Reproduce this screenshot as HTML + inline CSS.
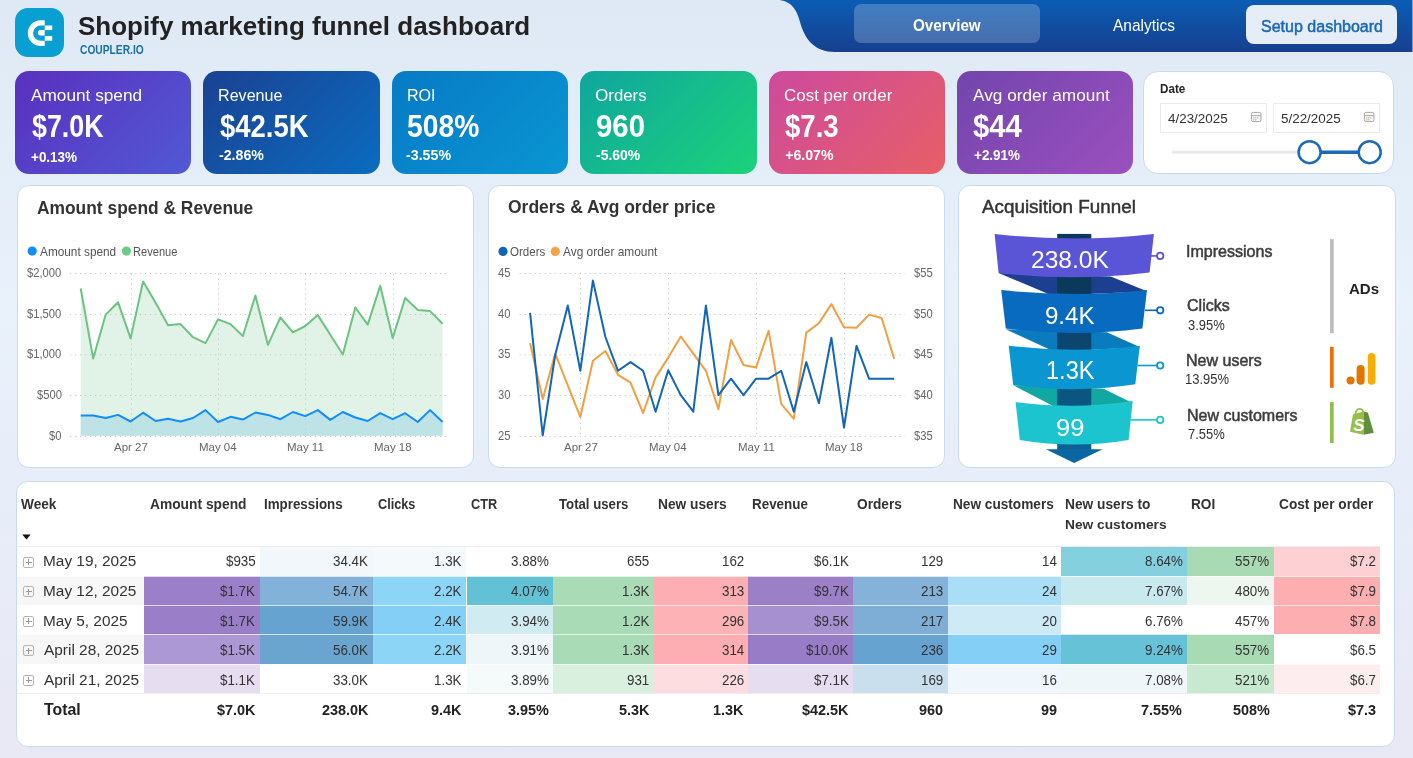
<!DOCTYPE html>
<html><head><meta charset="utf-8"><style>
html,body{margin:0;padding:0;width:1413px;height:758px;overflow:hidden;}
body{position:relative;font-family:"Liberation Sans", sans-serif;}
.t{position:absolute;line-height:1;white-space:nowrap;font-family:"Liberation Sans", sans-serif;}
.tl{position:absolute;left:0;top:0;width:1413px;height:758px;will-change:transform;-webkit-font-smoothing:antialiased;}
svg.ov{position:absolute;left:0;top:0;}
</style></head><body>
<div style="position:absolute;left:0.00px;top:0.00px;width:1413.00px;height:758.00px;background:linear-gradient(180deg,#dee9f5 0%,#e0ebf6 8%,#e9f1fb 40%,#e7eef9 62%,#e9e8f5 100%);"></div>
<svg class="ov" width="1413" height="758" viewBox="0 0 1413 758"><defs>
<linearGradient id="nav" x1="0" y1="0" x2="0" y2="1">
<stop offset="0" stop-color="#0a5db4"/><stop offset="1" stop-color="#17408f"/></linearGradient>
</defs>
<path d="M777,0 C791,0 797,10 800,22 C805,40 815,52 835,52 L1413,52 L1413,0 Z" fill="url(#nav)"/></svg>
<div style="position:absolute;left:1412.00px;top:0.00px;width:1.00px;height:52.00px;background:rgba(200,215,235,0.6);"></div>
<div style="position:absolute;left:854.00px;top:4.00px;width:186.00px;height:39.20px;background:rgba(255,255,255,0.22);border-radius:7px;"></div>
<div style="position:absolute;left:1246.20px;top:5.20px;width:150.80px;height:38.60px;background:#e6edf7;border-radius:8px;"></div>
<div style="position:absolute;left:15.00px;top:8.00px;width:49.00px;height:49.00px;background:#089fd3;border-radius:13px;"></div>
<svg class="ov" width="1413" height="758" viewBox="0 0 1413 758"><g fill="#fff">
<path d="M44.7,20.2 L40.7,20.2 A12.9,12.9 0 0 0 40.7,46 L44.7,46 L44.7,40.7 L40.7,40.7 A7.6,7.6 0 0 1 40.7,25.5 L44.7,25.5 Z"/>
<path d="M44.7,30.1 L40.5,30.1 A2.65,2.65 0 0 0 40.5,35.4 L44.7,35.4 Z"/>
<rect x="44.7" y="25.5" width="7.5" height="4.6"/>
<rect x="44.7" y="36.1" width="7.5" height="4.6"/>
</g></svg>
<div style="position:absolute;left:15.00px;top:71.00px;width:176.40px;height:103.00px;background:linear-gradient(135deg,#5a30bf,#5159d4);border-radius:14px;"></div>
<div style="position:absolute;left:203.40px;top:71.00px;width:176.40px;height:103.00px;background:linear-gradient(135deg,#1b4192,#0a6cc0);border-radius:14px;"></div>
<div style="position:absolute;left:391.80px;top:71.00px;width:176.40px;height:103.00px;background:linear-gradient(135deg,#077ac6,#0a96d2);border-radius:14px;"></div>
<div style="position:absolute;left:580.20px;top:71.00px;width:176.40px;height:103.00px;background:linear-gradient(135deg,#0fa69e,#1cd27a);border-radius:14px;"></div>
<div style="position:absolute;left:768.60px;top:71.00px;width:176.40px;height:103.00px;background:linear-gradient(135deg,#cd4a9d,#e75f66);border-radius:14px;"></div>
<div style="position:absolute;left:957.00px;top:71.00px;width:176.40px;height:103.00px;background:linear-gradient(135deg,#7245ad,#9b50bf);border-radius:14px;"></div>
<div style="position:absolute;left:1143.00px;top:71.00px;width:251.00px;height:102.50px;background:#fff;border:1px solid #c8dbec;border-radius:15px;box-sizing:border-box;"></div>
<div style="position:absolute;left:1160.00px;top:102.50px;width:107.00px;height:30.00px;border:1.5px solid #ebebeb;box-sizing:border-box;"></div>
<div style="position:absolute;left:1272.60px;top:102.50px;width:107.00px;height:30.00px;border:1.5px solid #ebebeb;box-sizing:border-box;"></div>
<svg class="ov" width="1413" height="758" viewBox="0 0 1413 758"><rect x="1172" y="150.6" width="130" height="3" fill="#e9e9e9"/></svg>
<svg class="ov" width="1413" height="758" viewBox="0 0 1413 758"><line x1="1320" y1="152.2" x2="1358" y2="152.2" stroke="#1b6ab7" stroke-width="3.4"/></svg>
<svg class="ov" width="1413" height="758" viewBox="0 0 1413 758"><circle cx="1309.6" cy="152.2" r="11" fill="#fff" stroke="#1b6ab7" stroke-width="2.5"/></svg>
<svg class="ov" width="1413" height="758" viewBox="0 0 1413 758"><circle cx="1369.7" cy="152.2" r="11" fill="#fff" stroke="#1b6ab7" stroke-width="2.5"/></svg>
<svg class="ov" width="1413" height="758" viewBox="0 0 1413 758"><rect x="1251.4" y="112.4" width="9.6" height="9.2" rx="1.8" fill="#fafafa" stroke="#a8a8a8" stroke-width="1"/></svg>
<svg class="ov" width="1413" height="758" viewBox="0 0 1413 758"><line x1="1251.6" y1="115.6" x2="1260.8" y2="115.6" stroke="#a8a8a8" stroke-width="1"/></svg>
<svg class="ov" width="1413" height="758" viewBox="0 0 1413 758"><g fill="#b89a7a"><rect x="1253.2" y="117.3" width="1.1" height="1.1"/><rect x="1255.2" y="117.3" width="1.1" height="1.1"/><rect x="1257.2" y="117.3" width="1.1" height="1.1"/><rect x="1253.2" y="119.3" width="1.1" height="1.1"/><rect x="1255.2" y="119.3" width="1.1" height="1.1"/></g></svg>
<svg class="ov" width="1413" height="758" viewBox="0 0 1413 758"><rect x="1364.4" y="112.4" width="9.6" height="9.2" rx="1.8" fill="#fafafa" stroke="#a8a8a8" stroke-width="1"/></svg>
<svg class="ov" width="1413" height="758" viewBox="0 0 1413 758"><line x1="1364.6" y1="115.6" x2="1373.8" y2="115.6" stroke="#a8a8a8" stroke-width="1"/></svg>
<svg class="ov" width="1413" height="758" viewBox="0 0 1413 758"><g fill="#b89a7a"><rect x="1366.2" y="117.3" width="1.1" height="1.1"/><rect x="1368.2" y="117.3" width="1.1" height="1.1"/><rect x="1370.2" y="117.3" width="1.1" height="1.1"/><rect x="1366.2" y="119.3" width="1.1" height="1.1"/><rect x="1368.2" y="119.3" width="1.1" height="1.1"/></g></svg>
<div style="position:absolute;left:17.00px;top:185.00px;width:457.00px;height:282.50px;background:#fff;border:1px solid #c8dcee;border-radius:12px;box-sizing:border-box;"></div>
<div style="position:absolute;left:488.00px;top:185.00px;width:456.50px;height:282.50px;background:#fff;border:1px solid #c8dcee;border-radius:12px;box-sizing:border-box;"></div>
<div style="position:absolute;left:958.00px;top:185.00px;width:438.00px;height:282.50px;background:#fff;border:1px solid #c8dcee;border-radius:12px;box-sizing:border-box;"></div>
<svg class="ov" width="1413" height="758" viewBox="0 0 1413 758"><circle cx="32.2" cy="251.1" r="4.6" fill="#118dff"/><circle cx="126.4" cy="251.1" r="4.6" fill="#6ccb85"/></svg>
<svg class="ov" width="1413" height="758" viewBox="0 0 1413 758"><polygon points="80.7,435.8 80.7,288.5 93.2,358.6 105.7,314.6 118.1,302.3 130.6,338.4 143.1,281.4 155.6,302.8 168.1,325.3 180.5,324.1 193.0,337.2 205.5,343.1 218.0,319.4 230.5,324.1 242.9,336.0 255.4,295.6 267.9,344.8 280.4,317.5 292.9,332.4 305.3,326.0 317.8,315.1 330.3,334.8 342.8,354.5 355.3,307.5 367.7,324.6 380.2,285.7 392.7,337.9 405.2,298.0 417.7,309.9 430.1,311.1 442.6,323.7 442.6,435.8" fill="#e1f3e6"/></svg>
<svg class="ov" width="1413" height="758" viewBox="0 0 1413 758"><polygon points="80.7,435.8 80.7,415.6 93.2,415.6 105.7,418.0 118.1,414.9 130.6,421.5 143.1,412.7 155.6,421.0 168.1,418.7 180.5,421.5 193.0,418.0 205.5,410.1 218.0,422.0 230.5,416.8 242.9,419.6 255.4,412.5 267.9,414.9 280.4,419.2 292.9,412.0 305.3,416.1 317.8,410.1 330.3,419.9 342.8,412.0 355.3,417.5 367.7,421.0 380.2,413.2 392.7,419.2 405.2,413.2 417.7,422.0 430.1,410.1 442.6,422.0 442.6,435.8" fill="#bde3e7"/></svg>
<svg class="ov" width="1413" height="758" viewBox="0 0 1413 758"><line x1="70" y1="273.5" x2="449.3" y2="273.5" stroke="#c6c6c6" stroke-width="1" stroke-dasharray="1.2 3.8"/></svg>
<svg class="ov" width="1413" height="758" viewBox="0 0 1413 758"><line x1="70" y1="314.5" x2="449.3" y2="314.5" stroke="#c6c6c6" stroke-width="1" stroke-dasharray="1.2 3.8"/></svg>
<svg class="ov" width="1413" height="758" viewBox="0 0 1413 758"><line x1="70" y1="354.8" x2="449.3" y2="354.8" stroke="#c6c6c6" stroke-width="1" stroke-dasharray="1.2 3.8"/></svg>
<svg class="ov" width="1413" height="758" viewBox="0 0 1413 758"><line x1="70" y1="395.5" x2="449.3" y2="395.5" stroke="#c6c6c6" stroke-width="1" stroke-dasharray="1.2 3.8"/></svg>
<svg class="ov" width="1413" height="758" viewBox="0 0 1413 758"><line x1="70" y1="436.5" x2="449.3" y2="436.5" stroke="#c6c6c6" stroke-width="1" stroke-dasharray="1.2 3.8"/></svg>
<svg class="ov" width="1413" height="758" viewBox="0 0 1413 758"><line x1="131.5" y1="273.5" x2="131.5" y2="435.8" stroke="#c6c6c6" stroke-width="1" stroke-dasharray="1.2 3.8"/></svg>
<svg class="ov" width="1413" height="758" viewBox="0 0 1413 758"><line x1="218.5" y1="273.5" x2="218.5" y2="435.8" stroke="#c6c6c6" stroke-width="1" stroke-dasharray="1.2 3.8"/></svg>
<svg class="ov" width="1413" height="758" viewBox="0 0 1413 758"><line x1="305.5" y1="273.5" x2="305.5" y2="435.8" stroke="#c6c6c6" stroke-width="1" stroke-dasharray="1.2 3.8"/></svg>
<svg class="ov" width="1413" height="758" viewBox="0 0 1413 758"><line x1="393.5" y1="273.5" x2="393.5" y2="435.8" stroke="#c6c6c6" stroke-width="1" stroke-dasharray="1.2 3.8"/></svg>
<svg class="ov" width="1413" height="758" viewBox="0 0 1413 758"><polyline points="80.7,288.5 93.2,358.6 105.7,314.6 118.1,302.3 130.6,338.4 143.1,281.4 155.6,302.8 168.1,325.3 180.5,324.1 193.0,337.2 205.5,343.1 218.0,319.4 230.5,324.1 242.9,336.0 255.4,295.6 267.9,344.8 280.4,317.5 292.9,332.4 305.3,326.0 317.8,315.1 330.3,334.8 342.8,354.5 355.3,307.5 367.7,324.6 380.2,285.7 392.7,337.9 405.2,298.0 417.7,309.9 430.1,311.1 442.6,323.7" fill="none" stroke="#6ac47f" stroke-width="2" stroke-linejoin="round"/></svg>
<svg class="ov" width="1413" height="758" viewBox="0 0 1413 758"><polyline points="80.7,415.6 93.2,415.6 105.7,418.0 118.1,414.9 130.6,421.5 143.1,412.7 155.6,421.0 168.1,418.7 180.5,421.5 193.0,418.0 205.5,410.1 218.0,422.0 230.5,416.8 242.9,419.6 255.4,412.5 267.9,414.9 280.4,419.2 292.9,412.0 305.3,416.1 317.8,410.1 330.3,419.9 342.8,412.0 355.3,417.5 367.7,421.0 380.2,413.2 392.7,419.2 405.2,413.2 417.7,422.0 430.1,410.1 442.6,422.0" fill="none" stroke="#118dff" stroke-width="2" stroke-linejoin="round"/></svg>
<svg class="ov" width="1413" height="758" viewBox="0 0 1413 758"><circle cx="503" cy="251.4" r="4.6" fill="#1163b6"/><circle cx="555.3" cy="251.4" r="4.6" fill="#f0a545"/></svg>
<svg class="ov" width="1413" height="758" viewBox="0 0 1413 758"><line x1="519.6" y1="273.5" x2="905" y2="273.5" stroke="#c6c6c6" stroke-width="1" stroke-dasharray="1.2 3.8"/></svg>
<svg class="ov" width="1413" height="758" viewBox="0 0 1413 758"><line x1="519.6" y1="314.5" x2="905" y2="314.5" stroke="#c6c6c6" stroke-width="1" stroke-dasharray="1.2 3.8"/></svg>
<svg class="ov" width="1413" height="758" viewBox="0 0 1413 758"><line x1="519.6" y1="354.8" x2="905" y2="354.8" stroke="#c6c6c6" stroke-width="1" stroke-dasharray="1.2 3.8"/></svg>
<svg class="ov" width="1413" height="758" viewBox="0 0 1413 758"><line x1="519.6" y1="395.5" x2="905" y2="395.5" stroke="#c6c6c6" stroke-width="1" stroke-dasharray="1.2 3.8"/></svg>
<svg class="ov" width="1413" height="758" viewBox="0 0 1413 758"><line x1="519.6" y1="436.5" x2="905" y2="436.5" stroke="#c6c6c6" stroke-width="1" stroke-dasharray="1.2 3.8"/></svg>
<svg class="ov" width="1413" height="758" viewBox="0 0 1413 758"><line x1="580.5" y1="272.9" x2="580.5" y2="435.5" stroke="#c6c6c6" stroke-width="1" stroke-dasharray="1.2 3.8"/></svg>
<svg class="ov" width="1413" height="758" viewBox="0 0 1413 758"><line x1="668.5" y1="272.9" x2="668.5" y2="435.5" stroke="#c6c6c6" stroke-width="1" stroke-dasharray="1.2 3.8"/></svg>
<svg class="ov" width="1413" height="758" viewBox="0 0 1413 758"><line x1="756.5" y1="272.9" x2="756.5" y2="435.5" stroke="#c6c6c6" stroke-width="1" stroke-dasharray="1.2 3.8"/></svg>
<svg class="ov" width="1413" height="758" viewBox="0 0 1413 758"><line x1="844.5" y1="272.9" x2="844.5" y2="435.5" stroke="#c6c6c6" stroke-width="1" stroke-dasharray="1.2 3.8"/></svg>
<svg class="ov" width="1413" height="758" viewBox="0 0 1413 758"><polyline points="530.1,343.1 542.7,399.0 555.2,353.7 567.8,385.3 580.3,417.0 592.9,360.8 605.4,351.0 618.0,374.8 630.5,382.7 643.1,413.0 655.6,377.4 668.2,357.6 680.8,336.5 693.3,353.7 705.9,370.8 718.4,409.1 731.0,339.9 743.5,365.0 756.1,367.4 768.6,330.7 781.2,403.8 793.8,418.8 806.3,332.6 818.9,323.3 831.4,304.1 844.0,327.3 856.5,327.8 869.1,314.6 881.6,318.0 894.2,358.9" fill="none" stroke="#f0a040" stroke-width="2" stroke-linejoin="round"/></svg>
<svg class="ov" width="1413" height="758" viewBox="0 0 1413 758"><polyline points="530.1,312.8 542.7,435.5 555.2,355.0 567.8,305.4 580.3,370.8 592.9,280.6 605.4,337.0 618.0,370.8 630.5,362.1 643.1,370.8 655.6,411.7 668.2,370.3 680.8,395.1 693.3,411.7 705.9,305.4 718.4,395.1 731.0,378.7 743.5,395.1 756.1,378.7 768.6,378.7 781.2,370.8 793.8,411.7 806.3,362.1 818.9,403.3 831.4,337.8 844.0,427.5 856.5,345.8 869.1,378.7 881.6,378.7 894.2,378.7" fill="none" stroke="#1266b8" stroke-width="2" stroke-linejoin="round"/></svg>
<svg class="ov" width="1413" height="758" viewBox="0 0 1413 758"><polygon points="998.6,273 1110.7,276.5 1147.5,291.5 1052,295.6" fill="#1c3f90"/><polygon points="1005.8,329.3 1106.8,332.3 1140.2,347.3 1054.6,351.7" fill="#0a7bbd"/><polygon points="1013.2,385.2 1103.6,388.7 1133,403.2 1056.1,407.6" fill="#11a8a2"/><rect x="1057.2" y="233.9" width="34.1" height="60" fill="#0b395b"/><rect x="1057.2" y="300" width="34.1" height="55" fill="#0a4670"/><rect x="1057.2" y="355" width="34.1" height="55" fill="#0b5581"/><rect x="1057.2" y="410" width="34.1" height="40" fill="#0d5f95"/><path d="M994.6,233.9 Q1074,243.1 1153.9,233.9 L1149.6,272.5 Q1074,281.9 998.6,273 Z" fill="#5a55d7"/><path d="M1001.2,290.1 Q1074,298 1147,290 L1142.4,328.6 Q1074,337.4 1005.8,328.6 Z" fill="#096bc0"/><path d="M1008.7,345.7 Q1074,353.7 1139.8,345.7 L1135.3,384.3 Q1074,393.8 1013.2,384.9 Z" fill="#0a97d1"/><path d="M1015.6,402.1 Q1074,410 1132.7,401.1 L1128.6,440 Q1074,449 1019.8,440 Z" fill="#1bc4cf"/><polygon points="1045.9,449.2 1102.6,449.2 1074.1,463" fill="#0b67a1"/><line x1="1151" y1="255.9" x2="1157" y2="255.9" stroke="#5a55d7" stroke-width="1.6"/><circle cx="1160.2" cy="255.9" r="3.2" fill="#fff" stroke="#5a55d7" stroke-width="1.8"/><line x1="1145" y1="310.3" x2="1157" y2="310.3" stroke="#096bc0" stroke-width="1.6"/><circle cx="1160.2" cy="310.3" r="3.2" fill="#fff" stroke="#096bc0" stroke-width="1.8"/><line x1="1137.5" y1="365.5" x2="1157" y2="365.5" stroke="#0a97d1" stroke-width="1.6"/><circle cx="1160.2" cy="365.5" r="3.2" fill="#fff" stroke="#0a97d1" stroke-width="1.8"/><line x1="1130.5" y1="419.9" x2="1157" y2="419.9" stroke="#1bc4cf" stroke-width="1.6"/><circle cx="1160.2" cy="419.9" r="3.2" fill="#fff" stroke="#1bc4cf" stroke-width="1.8"/><rect x="1330" y="239.1" width="3.7" height="94.1" fill="#bdbdbd"/><rect x="1330" y="346.8" width="3.7" height="41" fill="#e8710a"/><rect x="1330" y="402" width="3.7" height="41" fill="#8fc04a"/><rect x="1367.8" y="352.9" width="7.6" height="31.8" rx="3.8" fill="#f9ab00"/><rect x="1356.6" y="365" width="8" height="19.7" rx="4" fill="#e37400"/><circle cx="1350.5" cy="380.6" r="4" fill="#e37400"/><path d="M1350,431.8 L1353,414.3 L1363.5,411.6 L1363.5,434.7 Z" fill="#95bf47"/>
<path d="M1363.5,411.6 L1367.8,412.6 L1373.8,432.8 L1363.5,434.7 Z" fill="#5e8e3e"/>
<path d="M1355.3,414.2 C1355.8,410.2 1358,408.6 1360,408.8 C1362,409 1363,410.5 1363.3,412.2" fill="none" stroke="#95bf47" stroke-width="1.7"/>
<text x="1358.8" y="431.3" font-family="Liberation Sans" font-weight="700" font-style="italic" font-size="17" fill="#fff" text-anchor="middle">S</text></svg>
<div style="position:absolute;left:16.00px;top:481.00px;width:1378.50px;height:266.00px;background:#fff;border:1px solid #c8dcee;border-radius:12px;box-sizing:border-box;"></div>
<svg class="ov" width="1413" height="758" viewBox="0 0 1413 758"><polygon points="22.2,534.4 30.7,534.4 26.45,539.4" fill="#111"/></svg>
<div style="position:absolute;left:260.00px;top:546.30px;width:112.80px;height:29.30px;background:#f1f7fb;"></div>
<div style="position:absolute;left:372.80px;top:546.30px;width:93.70px;height:29.30px;background:#f4f9fc;"></div>
<div style="position:absolute;left:1061.00px;top:546.30px;width:125.90px;height:29.30px;background:#84d0de;"></div>
<div style="position:absolute;left:1186.90px;top:546.30px;width:87.10px;height:29.30px;background:#a8dbb4;"></div>
<div style="position:absolute;left:1274.00px;top:546.30px;width:106.10px;height:29.30px;background:#fdd0d4;"></div>
<div style="position:absolute;left:17.00px;top:575.60px;width:127.40px;height:29.40px;background:#f7f7f7;"></div>
<div style="position:absolute;left:144.40px;top:575.60px;width:115.60px;height:29.40px;background:#9b7fc8;"></div>
<div style="position:absolute;left:260.00px;top:575.60px;width:112.80px;height:29.40px;background:#82b1d9;"></div>
<div style="position:absolute;left:372.80px;top:575.60px;width:93.70px;height:29.40px;background:#8cd5f6;"></div>
<div style="position:absolute;left:466.50px;top:575.60px;width:86.90px;height:29.40px;background:#63c1d6;"></div>
<div style="position:absolute;left:553.40px;top:575.60px;width:100.60px;height:29.40px;background:#a9dbb6;"></div>
<div style="position:absolute;left:654.00px;top:575.60px;width:94.30px;height:29.40px;background:#fdaeb2;"></div>
<div style="position:absolute;left:748.30px;top:575.60px;width:105.10px;height:29.40px;background:#9b80c8;"></div>
<div style="position:absolute;left:853.40px;top:575.60px;width:94.20px;height:29.40px;background:#84b2d8;"></div>
<div style="position:absolute;left:947.60px;top:575.60px;width:113.40px;height:29.40px;background:#aadef7;"></div>
<div style="position:absolute;left:1061.00px;top:575.60px;width:125.90px;height:29.40px;background:#c8e9ee;"></div>
<div style="position:absolute;left:1186.90px;top:575.60px;width:87.10px;height:29.40px;background:#edf7ef;"></div>
<div style="position:absolute;left:1274.00px;top:575.60px;width:106.10px;height:29.40px;background:#fdaeb1;"></div>
<div style="position:absolute;left:144.40px;top:605.00px;width:115.60px;height:29.30px;background:#9a7ec7;"></div>
<div style="position:absolute;left:260.00px;top:605.00px;width:112.80px;height:29.30px;background:#66a3d1;"></div>
<div style="position:absolute;left:372.80px;top:605.00px;width:93.70px;height:29.30px;background:#83cff6;"></div>
<div style="position:absolute;left:466.50px;top:605.00px;width:86.90px;height:29.30px;background:#d1ebf2;"></div>
<div style="position:absolute;left:553.40px;top:605.00px;width:100.60px;height:29.30px;background:#aadbb7;"></div>
<div style="position:absolute;left:654.00px;top:605.00px;width:94.30px;height:29.30px;background:#fdb2b6;"></div>
<div style="position:absolute;left:748.30px;top:605.00px;width:105.10px;height:29.30px;background:#a690d0;"></div>
<div style="position:absolute;left:853.40px;top:605.00px;width:94.20px;height:29.30px;background:#7eaed6;"></div>
<div style="position:absolute;left:947.60px;top:605.00px;width:113.40px;height:29.30px;background:#cdeaf6;"></div>
<div style="position:absolute;left:1274.00px;top:605.00px;width:106.10px;height:29.30px;background:#fdaeb1;"></div>
<div style="position:absolute;left:17.00px;top:634.30px;width:127.40px;height:29.50px;background:#f7f7f7;"></div>
<div style="position:absolute;left:144.40px;top:634.30px;width:115.60px;height:29.50px;background:#ad98d6;"></div>
<div style="position:absolute;left:260.00px;top:634.30px;width:112.80px;height:29.50px;background:#6aa5d0;"></div>
<div style="position:absolute;left:372.80px;top:634.30px;width:93.70px;height:29.50px;background:#8dd5f7;"></div>
<div style="position:absolute;left:466.50px;top:634.30px;width:86.90px;height:29.50px;background:#eef6f9;"></div>
<div style="position:absolute;left:553.40px;top:634.30px;width:100.60px;height:29.50px;background:#a9dbb6;"></div>
<div style="position:absolute;left:654.00px;top:634.30px;width:94.30px;height:29.50px;background:#fdaeb2;"></div>
<div style="position:absolute;left:748.30px;top:634.30px;width:105.10px;height:29.50px;background:#997cc7;"></div>
<div style="position:absolute;left:853.40px;top:634.30px;width:94.20px;height:29.50px;background:#66a3d0;"></div>
<div style="position:absolute;left:947.60px;top:634.30px;width:113.40px;height:29.50px;background:#83cff5;"></div>
<div style="position:absolute;left:1061.00px;top:634.30px;width:125.90px;height:29.50px;background:#66c2d6;"></div>
<div style="position:absolute;left:1186.90px;top:634.30px;width:87.10px;height:29.50px;background:#a8dbb4;"></div>
<div style="position:absolute;left:144.40px;top:663.80px;width:115.60px;height:29.40px;background:#e6ddf1;"></div>
<div style="position:absolute;left:466.50px;top:663.80px;width:86.90px;height:29.40px;background:#f5fafb;"></div>
<div style="position:absolute;left:553.40px;top:663.80px;width:100.60px;height:29.40px;background:#d9f0df;"></div>
<div style="position:absolute;left:654.00px;top:663.80px;width:94.30px;height:29.40px;background:#fddde0;"></div>
<div style="position:absolute;left:748.30px;top:663.80px;width:105.10px;height:29.40px;background:#e6ddf1;"></div>
<div style="position:absolute;left:853.40px;top:663.80px;width:94.20px;height:29.40px;background:#c9dfee;"></div>
<div style="position:absolute;left:947.60px;top:663.80px;width:113.40px;height:29.40px;background:#f0f7fc;"></div>
<div style="position:absolute;left:1061.00px;top:663.80px;width:125.90px;height:29.40px;background:#eef6fa;"></div>
<div style="position:absolute;left:1186.90px;top:663.80px;width:87.10px;height:29.40px;background:#c6e9cf;"></div>
<div style="position:absolute;left:1274.00px;top:663.80px;width:106.10px;height:29.40px;background:#fdedee;"></div>
<div style="position:absolute;left:17.00px;top:546.30px;width:1363.10px;height:1.00px;background:#eeeeee;"></div>
<div style="position:absolute;left:17.00px;top:575.60px;width:1363.10px;height:1.00px;background:rgba(255,255,255,0.7);"></div>
<div style="position:absolute;left:17.00px;top:605.00px;width:1363.10px;height:1.00px;background:rgba(255,255,255,0.7);"></div>
<div style="position:absolute;left:17.00px;top:634.30px;width:1363.10px;height:1.00px;background:rgba(255,255,255,0.7);"></div>
<div style="position:absolute;left:17.00px;top:663.80px;width:1363.10px;height:1.00px;background:rgba(255,255,255,0.7);"></div>
<div style="position:absolute;left:17.00px;top:693.20px;width:1363.10px;height:1.00px;background:#eeeeee;"></div>
<div style="position:absolute;left:23.20px;top:556.50px;width:11.00px;height:11.00px;border:1px solid #b5b5b5;border-radius:2px;box-sizing:border-box;"></div>
<div style="position:absolute;left:25.70px;top:561.60px;width:6.00px;height:1.00px;background:#999;"></div>
<div style="position:absolute;left:28.20px;top:559.00px;width:1.00px;height:6.00px;background:#999;"></div>
<div style="position:absolute;left:23.20px;top:586.10px;width:11.00px;height:11.00px;border:1px solid #b5b5b5;border-radius:2px;box-sizing:border-box;"></div>
<div style="position:absolute;left:25.70px;top:591.20px;width:6.00px;height:1.00px;background:#999;"></div>
<div style="position:absolute;left:28.20px;top:588.60px;width:1.00px;height:6.00px;background:#999;"></div>
<div style="position:absolute;left:23.20px;top:615.70px;width:11.00px;height:11.00px;border:1px solid #b5b5b5;border-radius:2px;box-sizing:border-box;"></div>
<div style="position:absolute;left:25.70px;top:620.80px;width:6.00px;height:1.00px;background:#999;"></div>
<div style="position:absolute;left:28.20px;top:618.20px;width:1.00px;height:6.00px;background:#999;"></div>
<div style="position:absolute;left:23.20px;top:645.30px;width:11.00px;height:11.00px;border:1px solid #b5b5b5;border-radius:2px;box-sizing:border-box;"></div>
<div style="position:absolute;left:25.70px;top:650.40px;width:6.00px;height:1.00px;background:#999;"></div>
<div style="position:absolute;left:28.20px;top:647.80px;width:1.00px;height:6.00px;background:#999;"></div>
<div style="position:absolute;left:23.20px;top:674.90px;width:11.00px;height:11.00px;border:1px solid #b5b5b5;border-radius:2px;box-sizing:border-box;"></div>
<div style="position:absolute;left:25.70px;top:680.00px;width:6.00px;height:1.00px;background:#999;"></div>
<div style="position:absolute;left:28.20px;top:677.40px;width:1.00px;height:6.00px;background:#999;"></div>
<div class="tl">
<div class="t" style="left:912.99px;top:18.00px;font-size:15.86px;font-weight:700;color:#fff;transform:scaleX(0.9595);transform-origin:0 0;">Overview</div>
<div class="t" style="left:1112.92px;top:18.00px;font-size:16.55px;font-weight:400;color:#fff;transform:scaleX(0.9352);transform-origin:0 0;">Analytics</div>
<div class="t" style="left:1260.78px;top:19.00px;font-size:16.86px;font-weight:400;color:#1a68b3;transform:scaleX(0.9501);transform-origin:0 0;-webkit-text-stroke:0.5px #1a68b3;">Setup dashboard</div>
<div class="t" style="left:78.02px;top:13.00px;font-size:26.00px;font-weight:700;color:#222;">Shopify marketing funnel dashboard</div>
<div class="t" style="left:79.69px;top:44.00px;font-size:12.32px;font-weight:700;color:#1a6fa8;transform:scaleX(0.8316);transform-origin:0 0;">COUPLER.IO</div>
<div class="t" style="left:31.11px;top:88.00px;font-size:16.81px;font-weight:400;color:#fff;transform:scaleX(1.0256);transform-origin:0 0;">Amount spend</div>
<div class="t" style="left:31.70px;top:111.00px;font-size:31.01px;font-weight:700;color:#fff;transform:scaleX(0.8659);transform-origin:0 0;">$7.0K</div>
<div class="t" style="left:31.46px;top:150.00px;font-size:14.14px;font-weight:700;color:#fff;transform:scaleX(0.9547);transform-origin:0 0;">+0.13%</div>
<div class="t" style="left:218.31px;top:88.00px;font-size:16.81px;font-weight:400;color:#fff;transform:scaleX(0.9594);transform-origin:0 0;">Revenue</div>
<div class="t" style="left:219.69px;top:111.00px;font-size:31.01px;font-weight:700;color:#fff;transform:scaleX(0.8857);transform-origin:0 0;">$42.5K</div>
<div class="t" style="left:218.63px;top:148.00px;font-size:14.14px;font-weight:700;color:#fff;transform:scaleX(1.0042);transform-origin:0 0;">-2.86%</div>
<div class="t" style="left:407.21px;top:88.00px;font-size:16.81px;font-weight:400;color:#fff;transform:scaleX(0.9562);transform-origin:0 0;">ROI</div>
<div class="t" style="left:407.45px;top:111.00px;font-size:30.57px;font-weight:700;color:#fff;transform:scaleX(0.9245);transform-origin:0 0;">508%</div>
<div class="t" style="left:405.63px;top:148.00px;font-size:14.14px;font-weight:700;color:#fff;transform:scaleX(1.0065);transform-origin:0 0;">-3.55%</div>
<div class="t" style="left:595.24px;top:88.00px;font-size:16.81px;font-weight:400;color:#fff;">Orders</div>
<div class="t" style="left:595.57px;top:111.00px;font-size:30.57px;font-weight:700;color:#fff;transform:scaleX(0.9607);transform-origin:0 0;">960</div>
<div class="t" style="left:596.04px;top:148.00px;font-size:14.14px;font-weight:700;color:#fff;transform:scaleX(0.9860);transform-origin:0 0;">-5.60%</div>
<div class="t" style="left:784.05px;top:88.00px;font-size:16.81px;font-weight:400;color:#fff;transform:scaleX(1.0091);transform-origin:0 0;">Cost per order</div>
<div class="t" style="left:785.09px;top:111.00px;font-size:31.01px;font-weight:700;color:#fff;transform:scaleX(0.8899);transform-origin:0 0;">$7.3</div>
<div class="t" style="left:785.23px;top:148.00px;font-size:14.14px;font-weight:700;color:#fff;">+6.07%</div>
<div class="t" style="left:972.81px;top:88.00px;font-size:16.81px;font-weight:400;color:#fff;transform:scaleX(1.0267);transform-origin:0 0;">Avg order amount</div>
<div class="t" style="left:973.26px;top:111.00px;font-size:31.01px;font-weight:700;color:#fff;transform:scaleX(0.9447);transform-origin:0 0;">$44</div>
<div class="t" style="left:974.36px;top:148.00px;font-size:14.14px;font-weight:700;color:#fff;transform:scaleX(0.9547);transform-origin:0 0;">+2.91%</div>
<div class="t" style="left:1159.64px;top:83.00px;font-size:12.46px;font-weight:700;color:#252525;transform:scaleX(0.9364);transform-origin:0 0;">Date</div>
<div class="t" style="left:1168.36px;top:112.00px;font-size:13.29px;font-weight:400;color:#333;transform:scaleX(1.0093);transform-origin:0 0;">4/23/2025</div>
<div class="t" style="left:1281.26px;top:112.00px;font-size:13.29px;font-weight:400;color:#333;transform:scaleX(1.0093);transform-origin:0 0;">5/22/2025</div>
<div class="t" style="left:37.27px;top:199.00px;font-size:18.12px;font-weight:700;color:#333;transform:scaleX(0.9596);transform-origin:0 0;">Amount spend &amp; Revenue</div>
<div class="t" style="left:39.54px;top:246.00px;font-size:12.75px;font-weight:400;color:#555;transform:scaleX(0.9267);transform-origin:0 0;">Amount spend</div>
<div class="t" style="left:132.71px;top:246.00px;font-size:12.75px;font-weight:400;color:#555;transform:scaleX(0.8701);transform-origin:0 0;">Revenue</div>
<div class="t" style="left:27.29px;top:267.00px;font-size:12.43px;font-weight:400;color:#666;transform:scaleX(0.9035);transform-origin:0 0;">$2,000</div>
<div class="t" style="left:27.29px;top:308.00px;font-size:12.43px;font-weight:400;color:#666;transform:scaleX(0.9035);transform-origin:0 0;">$1,500</div>
<div class="t" style="left:27.29px;top:348.00px;font-size:12.43px;font-weight:400;color:#666;transform:scaleX(0.9035);transform-origin:0 0;">$1,000</div>
<div class="t" style="left:36.66px;top:389.00px;font-size:12.43px;font-weight:400;color:#666;transform:scaleX(0.9035);transform-origin:0 0;">$500</div>
<div class="t" style="left:49.18px;top:430.00px;font-size:12.43px;font-weight:400;color:#666;transform:scaleX(0.9035);transform-origin:0 0;">$0</div>
<div class="t" style="left:114.44px;top:442.00px;font-size:11.59px;font-weight:400;color:#666;transform:scaleX(0.9908);transform-origin:0 0;">Apr 27</div>
<div class="t" style="left:199.37px;top:442.00px;font-size:11.59px;font-weight:400;color:#666;transform:scaleX(0.9908);transform-origin:0 0;">May 04</div>
<div class="t" style="left:287.19px;top:442.00px;font-size:11.59px;font-weight:400;color:#666;transform:scaleX(0.9908);transform-origin:0 0;">May 11</div>
<div class="t" style="left:374.23px;top:442.00px;font-size:11.59px;font-weight:400;color:#666;transform:scaleX(0.9908);transform-origin:0 0;">May 18</div>
<div class="t" style="left:507.80px;top:199.00px;font-size:17.86px;font-weight:700;color:#333;transform:scaleX(0.9781);transform-origin:0 0;">Orders &amp; Avg order price</div>
<div class="t" style="left:509.88px;top:246.00px;font-size:12.57px;font-weight:400;color:#555;transform:scaleX(0.9198);transform-origin:0 0;">Orders</div>
<div class="t" style="left:562.74px;top:246.00px;font-size:12.75px;font-weight:400;color:#555;transform:scaleX(0.9326);transform-origin:0 0;">Avg order amount</div>
<div class="t" style="left:498.38px;top:267.00px;font-size:12.43px;font-weight:400;color:#666;transform:scaleX(0.9035);transform-origin:0 0;">45</div>
<div class="t" style="left:914.29px;top:267.00px;font-size:12.43px;font-weight:400;color:#666;transform:scaleX(0.9035);transform-origin:0 0;">$55</div>
<div class="t" style="left:498.38px;top:308.00px;font-size:12.43px;font-weight:400;color:#666;transform:scaleX(0.9035);transform-origin:0 0;">40</div>
<div class="t" style="left:914.29px;top:308.00px;font-size:12.43px;font-weight:400;color:#666;transform:scaleX(0.9035);transform-origin:0 0;">$50</div>
<div class="t" style="left:498.38px;top:348.00px;font-size:12.43px;font-weight:400;color:#666;transform:scaleX(0.9035);transform-origin:0 0;">35</div>
<div class="t" style="left:914.29px;top:348.00px;font-size:12.43px;font-weight:400;color:#666;transform:scaleX(0.9035);transform-origin:0 0;">$45</div>
<div class="t" style="left:498.38px;top:389.00px;font-size:12.43px;font-weight:400;color:#666;transform:scaleX(0.9035);transform-origin:0 0;">30</div>
<div class="t" style="left:914.29px;top:389.00px;font-size:12.43px;font-weight:400;color:#666;transform:scaleX(0.9035);transform-origin:0 0;">$40</div>
<div class="t" style="left:498.38px;top:430.00px;font-size:12.43px;font-weight:400;color:#666;transform:scaleX(0.9035);transform-origin:0 0;">25</div>
<div class="t" style="left:914.29px;top:430.00px;font-size:12.43px;font-weight:400;color:#666;transform:scaleX(0.9035);transform-origin:0 0;">$35</div>
<div class="t" style="left:563.74px;top:442.00px;font-size:11.59px;font-weight:400;color:#666;transform:scaleX(0.9908);transform-origin:0 0;">Apr 27</div>
<div class="t" style="left:649.17px;top:442.00px;font-size:11.59px;font-weight:400;color:#666;transform:scaleX(0.9908);transform-origin:0 0;">May 04</div>
<div class="t" style="left:737.59px;top:442.00px;font-size:11.59px;font-weight:400;color:#666;transform:scaleX(0.9908);transform-origin:0 0;">May 11</div>
<div class="t" style="left:825.03px;top:442.00px;font-size:11.59px;font-weight:400;color:#666;transform:scaleX(0.9908);transform-origin:0 0;">May 18</div>
<div class="t" style="left:982.31px;top:199.00px;font-size:17.68px;font-weight:400;color:#333;transform:scaleX(1.0655);transform-origin:0 0;-webkit-text-stroke:0.45px #333;">Acquisition Funnel</div>
<div class="t" style="left:1030.97px;top:248.00px;font-size:24.57px;font-weight:400;color:#fff;">238.0K</div>
<div class="t" style="left:1045.32px;top:304.00px;font-size:24.57px;font-weight:400;color:#fff;transform:scaleX(0.9788);transform-origin:0 0;">9.4K</div>
<div class="t" style="left:1046.43px;top:358.00px;font-size:25.57px;font-weight:400;color:#fff;transform:scaleX(0.9231);transform-origin:0 0;">1.3K</div>
<div class="t" style="left:1056.25px;top:416.00px;font-size:24.43px;font-weight:400;color:#fff;transform:scaleX(1.0435);transform-origin:0 0;">99</div>
<div class="t" style="left:1186.16px;top:244.00px;font-size:15.80px;font-weight:400;color:#3c3c3c;transform:scaleX(1.0147);transform-origin:0 0;-webkit-text-stroke:0.5px #3c3c3c;">Impressions</div>
<div class="t" style="left:1186.80px;top:298.00px;font-size:15.80px;font-weight:400;color:#3c3c3c;transform:scaleX(1.0147);transform-origin:0 0;-webkit-text-stroke:0.5px #3c3c3c;">Clicks</div>
<div class="t" style="left:1186.32px;top:353.00px;font-size:15.80px;font-weight:400;color:#3c3c3c;transform:scaleX(1.0147);transform-origin:0 0;-webkit-text-stroke:0.5px #3c3c3c;">New users</div>
<div class="t" style="left:1186.52px;top:408.00px;font-size:15.80px;font-weight:400;color:#3c3c3c;transform:scaleX(1.0147);transform-origin:0 0;-webkit-text-stroke:0.5px #3c3c3c;">New customers</div>
<div class="t" style="left:1188.28px;top:318.00px;font-size:14.29px;font-weight:400;color:#333;transform:scaleX(0.9080);transform-origin:0 0;">3.95%</div>
<div class="t" style="left:1184.83px;top:372.00px;font-size:14.29px;font-weight:400;color:#333;transform:scaleX(0.9080);transform-origin:0 0;">13.95%</div>
<div class="t" style="left:1188.15px;top:427.00px;font-size:14.29px;font-weight:400;color:#333;transform:scaleX(0.9080);transform-origin:0 0;">7.55%</div>
<div class="t" style="left:1348.52px;top:282.00px;font-size:14.20px;font-weight:700;color:#222;transform:scaleX(1.0589);transform-origin:0 0;">ADs</div>
<div class="t" style="left:21.40px;top:497.00px;font-size:14.06px;font-weight:700;color:#333;transform:scaleX(0.9731);transform-origin:0 0;">Week</div>
<div class="t" style="left:149.66px;top:497.00px;font-size:14.06px;font-weight:700;color:#333;transform:scaleX(0.9811);transform-origin:0 0;">Amount spend</div>
<div class="t" style="left:264.13px;top:497.00px;font-size:14.06px;font-weight:700;color:#333;transform:scaleX(0.9505);transform-origin:0 0;">Impressions</div>
<div class="t" style="left:377.99px;top:497.00px;font-size:14.06px;font-weight:700;color:#333;transform:scaleX(0.9038);transform-origin:0 0;">Clicks</div>
<div class="t" style="left:471.29px;top:497.00px;font-size:14.06px;font-weight:700;color:#333;transform:scaleX(0.9092);transform-origin:0 0;">CTR</div>
<div class="t" style="left:559.07px;top:497.00px;font-size:14.06px;font-weight:700;color:#333;transform:scaleX(0.9394);transform-origin:0 0;">Total users</div>
<div class="t" style="left:657.71px;top:497.00px;font-size:14.06px;font-weight:700;color:#333;transform:scaleX(0.9780);transform-origin:0 0;">New users</div>
<div class="t" style="left:752.03px;top:497.00px;font-size:14.06px;font-weight:700;color:#333;transform:scaleX(0.9555);transform-origin:0 0;">Revenue</div>
<div class="t" style="left:857.45px;top:497.00px;font-size:14.06px;font-weight:700;color:#333;transform:scaleX(0.9736);transform-origin:0 0;">Orders</div>
<div class="t" style="left:953.11px;top:497.00px;font-size:14.06px;font-weight:700;color:#333;transform:scaleX(0.9706);transform-origin:0 0;">New customers</div>
<div class="t" style="left:1065.31px;top:497.00px;font-size:14.06px;font-weight:700;color:#333;transform:scaleX(0.9763);transform-origin:0 0;">New users to</div>
<div class="t" style="left:1191.11px;top:497.00px;font-size:14.06px;font-weight:700;color:#333;transform:scaleX(0.9686);transform-origin:0 0;">ROI</div>
<div class="t" style="left:1278.85px;top:497.00px;font-size:14.06px;font-weight:700;color:#333;transform:scaleX(0.9741);transform-origin:0 0;">Cost per order</div>
<div class="t" style="left:1065.31px;top:518.00px;font-size:13.62px;font-weight:700;color:#333;transform:scaleX(1.0096);transform-origin:0 0;">New customers</div>
<div class="t" style="left:42.77px;top:553.00px;font-size:15.22px;font-weight:400;color:#333;transform:scaleX(1.0112);transform-origin:0 0;">May 19, 2025</div>
<div class="t" style="left:225.91px;top:554.00px;font-size:14.14px;font-weight:400;color:#333;transform:scaleX(0.9446);transform-origin:0 0;">$935</div>
<div class="t" style="left:333.17px;top:554.00px;font-size:14.14px;font-weight:400;color:#333;transform:scaleX(0.9446);transform-origin:0 0;">34.4K</div>
<div class="t" style="left:434.28px;top:554.00px;font-size:14.14px;font-weight:400;color:#333;transform:scaleX(0.9446);transform-origin:0 0;">1.3K</div>
<div class="t" style="left:511.09px;top:554.00px;font-size:14.14px;font-weight:400;color:#333;transform:scaleX(0.9446);transform-origin:0 0;">3.88%</div>
<div class="t" style="left:627.39px;top:554.00px;font-size:14.14px;font-weight:400;color:#333;transform:scaleX(0.9446);transform-origin:0 0;">655</div>
<div class="t" style="left:721.82px;top:554.00px;font-size:14.14px;font-weight:400;color:#333;transform:scaleX(0.9446);transform-origin:0 0;">162</div>
<div class="t" style="left:813.77px;top:554.00px;font-size:14.14px;font-weight:400;color:#333;transform:scaleX(0.9446);transform-origin:0 0;">$6.1K</div>
<div class="t" style="left:921.06px;top:554.00px;font-size:14.14px;font-weight:400;color:#333;transform:scaleX(0.9446);transform-origin:0 0;">129</div>
<div class="t" style="left:1041.67px;top:554.00px;font-size:14.14px;font-weight:400;color:#333;transform:scaleX(0.9446);transform-origin:0 0;">14</div>
<div class="t" style="left:1144.59px;top:554.00px;font-size:14.14px;font-weight:400;color:#333;transform:scaleX(0.9446);transform-origin:0 0;">8.64%</div>
<div class="t" style="left:1235.37px;top:554.00px;font-size:14.14px;font-weight:400;color:#333;transform:scaleX(0.9446);transform-origin:0 0;">557%</div>
<div class="t" style="left:1349.88px;top:554.00px;font-size:14.14px;font-weight:400;color:#333;transform:scaleX(0.9446);transform-origin:0 0;">$7.2</div>
<div class="t" style="left:42.77px;top:583.00px;font-size:15.22px;font-weight:400;color:#333;transform:scaleX(1.0112);transform-origin:0 0;">May 12, 2025</div>
<div class="t" style="left:220.37px;top:584.00px;font-size:14.14px;font-weight:400;color:#333;transform:scaleX(0.9446);transform-origin:0 0;">$1.7K</div>
<div class="t" style="left:333.17px;top:584.00px;font-size:14.14px;font-weight:400;color:#333;transform:scaleX(0.9446);transform-origin:0 0;">54.7K</div>
<div class="t" style="left:434.28px;top:584.00px;font-size:14.14px;font-weight:400;color:#333;transform:scaleX(0.9446);transform-origin:0 0;">2.2K</div>
<div class="t" style="left:511.09px;top:584.00px;font-size:14.14px;font-weight:400;color:#333;transform:scaleX(0.9446);transform-origin:0 0;">4.07%</div>
<div class="t" style="left:621.78px;top:584.00px;font-size:14.14px;font-weight:400;color:#333;transform:scaleX(0.9446);transform-origin:0 0;">1.3K</div>
<div class="t" style="left:721.76px;top:584.00px;font-size:14.14px;font-weight:400;color:#333;transform:scaleX(0.9446);transform-origin:0 0;">313</div>
<div class="t" style="left:813.77px;top:584.00px;font-size:14.14px;font-weight:400;color:#333;transform:scaleX(0.9446);transform-origin:0 0;">$9.7K</div>
<div class="t" style="left:921.06px;top:584.00px;font-size:14.14px;font-weight:400;color:#333;transform:scaleX(0.9446);transform-origin:0 0;">213</div>
<div class="t" style="left:1041.67px;top:584.00px;font-size:14.14px;font-weight:400;color:#333;transform:scaleX(0.9446);transform-origin:0 0;">24</div>
<div class="t" style="left:1144.59px;top:584.00px;font-size:14.14px;font-weight:400;color:#333;transform:scaleX(0.9446);transform-origin:0 0;">7.67%</div>
<div class="t" style="left:1235.37px;top:584.00px;font-size:14.14px;font-weight:400;color:#333;transform:scaleX(0.9446);transform-origin:0 0;">480%</div>
<div class="t" style="left:1349.82px;top:584.00px;font-size:14.14px;font-weight:400;color:#333;transform:scaleX(0.9446);transform-origin:0 0;">$7.9</div>
<div class="t" style="left:42.77px;top:613.00px;font-size:15.22px;font-weight:400;color:#333;transform:scaleX(1.0089);transform-origin:0 0;">May 5, 2025</div>
<div class="t" style="left:220.37px;top:614.00px;font-size:14.14px;font-weight:400;color:#333;transform:scaleX(0.9446);transform-origin:0 0;">$1.7K</div>
<div class="t" style="left:333.17px;top:614.00px;font-size:14.14px;font-weight:400;color:#333;transform:scaleX(0.9446);transform-origin:0 0;">59.9K</div>
<div class="t" style="left:434.28px;top:614.00px;font-size:14.14px;font-weight:400;color:#333;transform:scaleX(0.9446);transform-origin:0 0;">2.4K</div>
<div class="t" style="left:511.09px;top:614.00px;font-size:14.14px;font-weight:400;color:#333;transform:scaleX(0.9446);transform-origin:0 0;">3.94%</div>
<div class="t" style="left:621.78px;top:614.00px;font-size:14.14px;font-weight:400;color:#333;transform:scaleX(0.9446);transform-origin:0 0;">1.2K</div>
<div class="t" style="left:721.76px;top:614.00px;font-size:14.14px;font-weight:400;color:#333;transform:scaleX(0.9446);transform-origin:0 0;">296</div>
<div class="t" style="left:813.77px;top:614.00px;font-size:14.14px;font-weight:400;color:#333;transform:scaleX(0.9446);transform-origin:0 0;">$9.5K</div>
<div class="t" style="left:921.12px;top:614.00px;font-size:14.14px;font-weight:400;color:#333;transform:scaleX(0.9446);transform-origin:0 0;">217</div>
<div class="t" style="left:1041.81px;top:614.00px;font-size:14.14px;font-weight:400;color:#333;transform:scaleX(0.9446);transform-origin:0 0;">20</div>
<div class="t" style="left:1144.59px;top:614.00px;font-size:14.14px;font-weight:400;color:#333;transform:scaleX(0.9446);transform-origin:0 0;">6.76%</div>
<div class="t" style="left:1235.37px;top:614.00px;font-size:14.14px;font-weight:400;color:#333;transform:scaleX(0.9446);transform-origin:0 0;">457%</div>
<div class="t" style="left:1349.75px;top:614.00px;font-size:14.14px;font-weight:400;color:#333;transform:scaleX(0.9446);transform-origin:0 0;">$7.8</div>
<div class="t" style="left:43.92px;top:642.00px;font-size:15.22px;font-weight:400;color:#333;transform:scaleX(1.0117);transform-origin:0 0;">April 28, 2025</div>
<div class="t" style="left:220.37px;top:643.00px;font-size:14.14px;font-weight:400;color:#333;transform:scaleX(0.9446);transform-origin:0 0;">$1.5K</div>
<div class="t" style="left:333.17px;top:643.00px;font-size:14.14px;font-weight:400;color:#333;transform:scaleX(0.9446);transform-origin:0 0;">56.0K</div>
<div class="t" style="left:434.28px;top:643.00px;font-size:14.14px;font-weight:400;color:#333;transform:scaleX(0.9446);transform-origin:0 0;">2.2K</div>
<div class="t" style="left:511.09px;top:643.00px;font-size:14.14px;font-weight:400;color:#333;transform:scaleX(0.9446);transform-origin:0 0;">3.91%</div>
<div class="t" style="left:621.78px;top:643.00px;font-size:14.14px;font-weight:400;color:#333;transform:scaleX(0.9446);transform-origin:0 0;">1.3K</div>
<div class="t" style="left:721.56px;top:643.00px;font-size:14.14px;font-weight:400;color:#333;transform:scaleX(0.9446);transform-origin:0 0;">314</div>
<div class="t" style="left:806.28px;top:643.00px;font-size:14.14px;font-weight:400;color:#333;transform:scaleX(0.9446);transform-origin:0 0;">$10.0K</div>
<div class="t" style="left:921.06px;top:643.00px;font-size:14.14px;font-weight:400;color:#333;transform:scaleX(0.9446);transform-origin:0 0;">236</div>
<div class="t" style="left:1041.87px;top:643.00px;font-size:14.14px;font-weight:400;color:#333;transform:scaleX(0.9446);transform-origin:0 0;">29</div>
<div class="t" style="left:1144.59px;top:643.00px;font-size:14.14px;font-weight:400;color:#333;transform:scaleX(0.9446);transform-origin:0 0;">9.24%</div>
<div class="t" style="left:1235.37px;top:643.00px;font-size:14.14px;font-weight:400;color:#333;transform:scaleX(0.9446);transform-origin:0 0;">557%</div>
<div class="t" style="left:1349.75px;top:643.00px;font-size:14.14px;font-weight:400;color:#333;transform:scaleX(0.9446);transform-origin:0 0;">$6.5</div>
<div class="t" style="left:43.92px;top:672.00px;font-size:15.22px;font-weight:400;color:#333;transform:scaleX(1.0117);transform-origin:0 0;">April 21, 2025</div>
<div class="t" style="left:220.37px;top:673.00px;font-size:14.14px;font-weight:400;color:#333;transform:scaleX(0.9446);transform-origin:0 0;">$1.1K</div>
<div class="t" style="left:333.17px;top:673.00px;font-size:14.14px;font-weight:400;color:#333;transform:scaleX(0.9446);transform-origin:0 0;">33.0K</div>
<div class="t" style="left:434.28px;top:673.00px;font-size:14.14px;font-weight:400;color:#333;transform:scaleX(0.9446);transform-origin:0 0;">1.3K</div>
<div class="t" style="left:511.09px;top:673.00px;font-size:14.14px;font-weight:400;color:#333;transform:scaleX(0.9446);transform-origin:0 0;">3.89%</div>
<div class="t" style="left:627.46px;top:673.00px;font-size:14.14px;font-weight:400;color:#333;transform:scaleX(0.9446);transform-origin:0 0;">931</div>
<div class="t" style="left:721.76px;top:673.00px;font-size:14.14px;font-weight:400;color:#333;transform:scaleX(0.9446);transform-origin:0 0;">226</div>
<div class="t" style="left:813.77px;top:673.00px;font-size:14.14px;font-weight:400;color:#333;transform:scaleX(0.9446);transform-origin:0 0;">$7.1K</div>
<div class="t" style="left:921.06px;top:673.00px;font-size:14.14px;font-weight:400;color:#333;transform:scaleX(0.9446);transform-origin:0 0;">169</div>
<div class="t" style="left:1041.87px;top:673.00px;font-size:14.14px;font-weight:400;color:#333;transform:scaleX(0.9446);transform-origin:0 0;">16</div>
<div class="t" style="left:1144.59px;top:673.00px;font-size:14.14px;font-weight:400;color:#333;transform:scaleX(0.9446);transform-origin:0 0;">7.08%</div>
<div class="t" style="left:1235.37px;top:673.00px;font-size:14.14px;font-weight:400;color:#333;transform:scaleX(0.9446);transform-origin:0 0;">521%</div>
<div class="t" style="left:1349.88px;top:673.00px;font-size:14.14px;font-weight:400;color:#333;transform:scaleX(0.9446);transform-origin:0 0;">$6.7</div>
<div class="t" style="left:43.64px;top:701.00px;font-size:16.23px;font-weight:700;color:#222;transform:scaleX(0.9780);transform-origin:0 0;">Total</div>
<div class="t" style="left:216.79px;top:702.00px;font-size:15.29px;font-weight:700;color:#222;transform:scaleX(0.9440);transform-origin:0 0;">$7.0K</div>
<div class="t" style="left:321.51px;top:702.00px;font-size:15.29px;font-weight:700;color:#222;transform:scaleX(0.9440);transform-origin:0 0;">238.0K</div>
<div class="t" style="left:431.30px;top:702.00px;font-size:15.29px;font-weight:700;color:#222;transform:scaleX(0.9440);transform-origin:0 0;">9.4K</div>
<div class="t" style="left:507.95px;top:702.00px;font-size:15.29px;font-weight:700;color:#222;transform:scaleX(0.9440);transform-origin:0 0;">3.95%</div>
<div class="t" style="left:618.80px;top:702.00px;font-size:15.29px;font-weight:700;color:#222;transform:scaleX(0.9440);transform-origin:0 0;">5.3K</div>
<div class="t" style="left:713.10px;top:702.00px;font-size:15.29px;font-weight:700;color:#222;transform:scaleX(0.9440);transform-origin:0 0;">1.3K</div>
<div class="t" style="left:802.11px;top:702.00px;font-size:15.29px;font-weight:700;color:#222;transform:scaleX(0.9440);transform-origin:0 0;">$42.5K</div>
<div class="t" style="left:919.25px;top:702.00px;font-size:15.29px;font-weight:700;color:#222;transform:scaleX(0.9440);transform-origin:0 0;">960</div>
<div class="t" style="left:1040.59px;top:702.00px;font-size:15.29px;font-weight:700;color:#222;transform:scaleX(0.9440);transform-origin:0 0;">99</div>
<div class="t" style="left:1141.45px;top:702.00px;font-size:15.29px;font-weight:700;color:#222;transform:scaleX(0.9440);transform-origin:0 0;">7.55%</div>
<div class="t" style="left:1232.52px;top:702.00px;font-size:15.29px;font-weight:700;color:#222;transform:scaleX(0.9440);transform-origin:0 0;">508%</div>
<div class="t" style="left:1347.64px;top:702.00px;font-size:15.29px;font-weight:700;color:#222;transform:scaleX(0.9440);transform-origin:0 0;">$7.3</div>
</div>
</body></html>
